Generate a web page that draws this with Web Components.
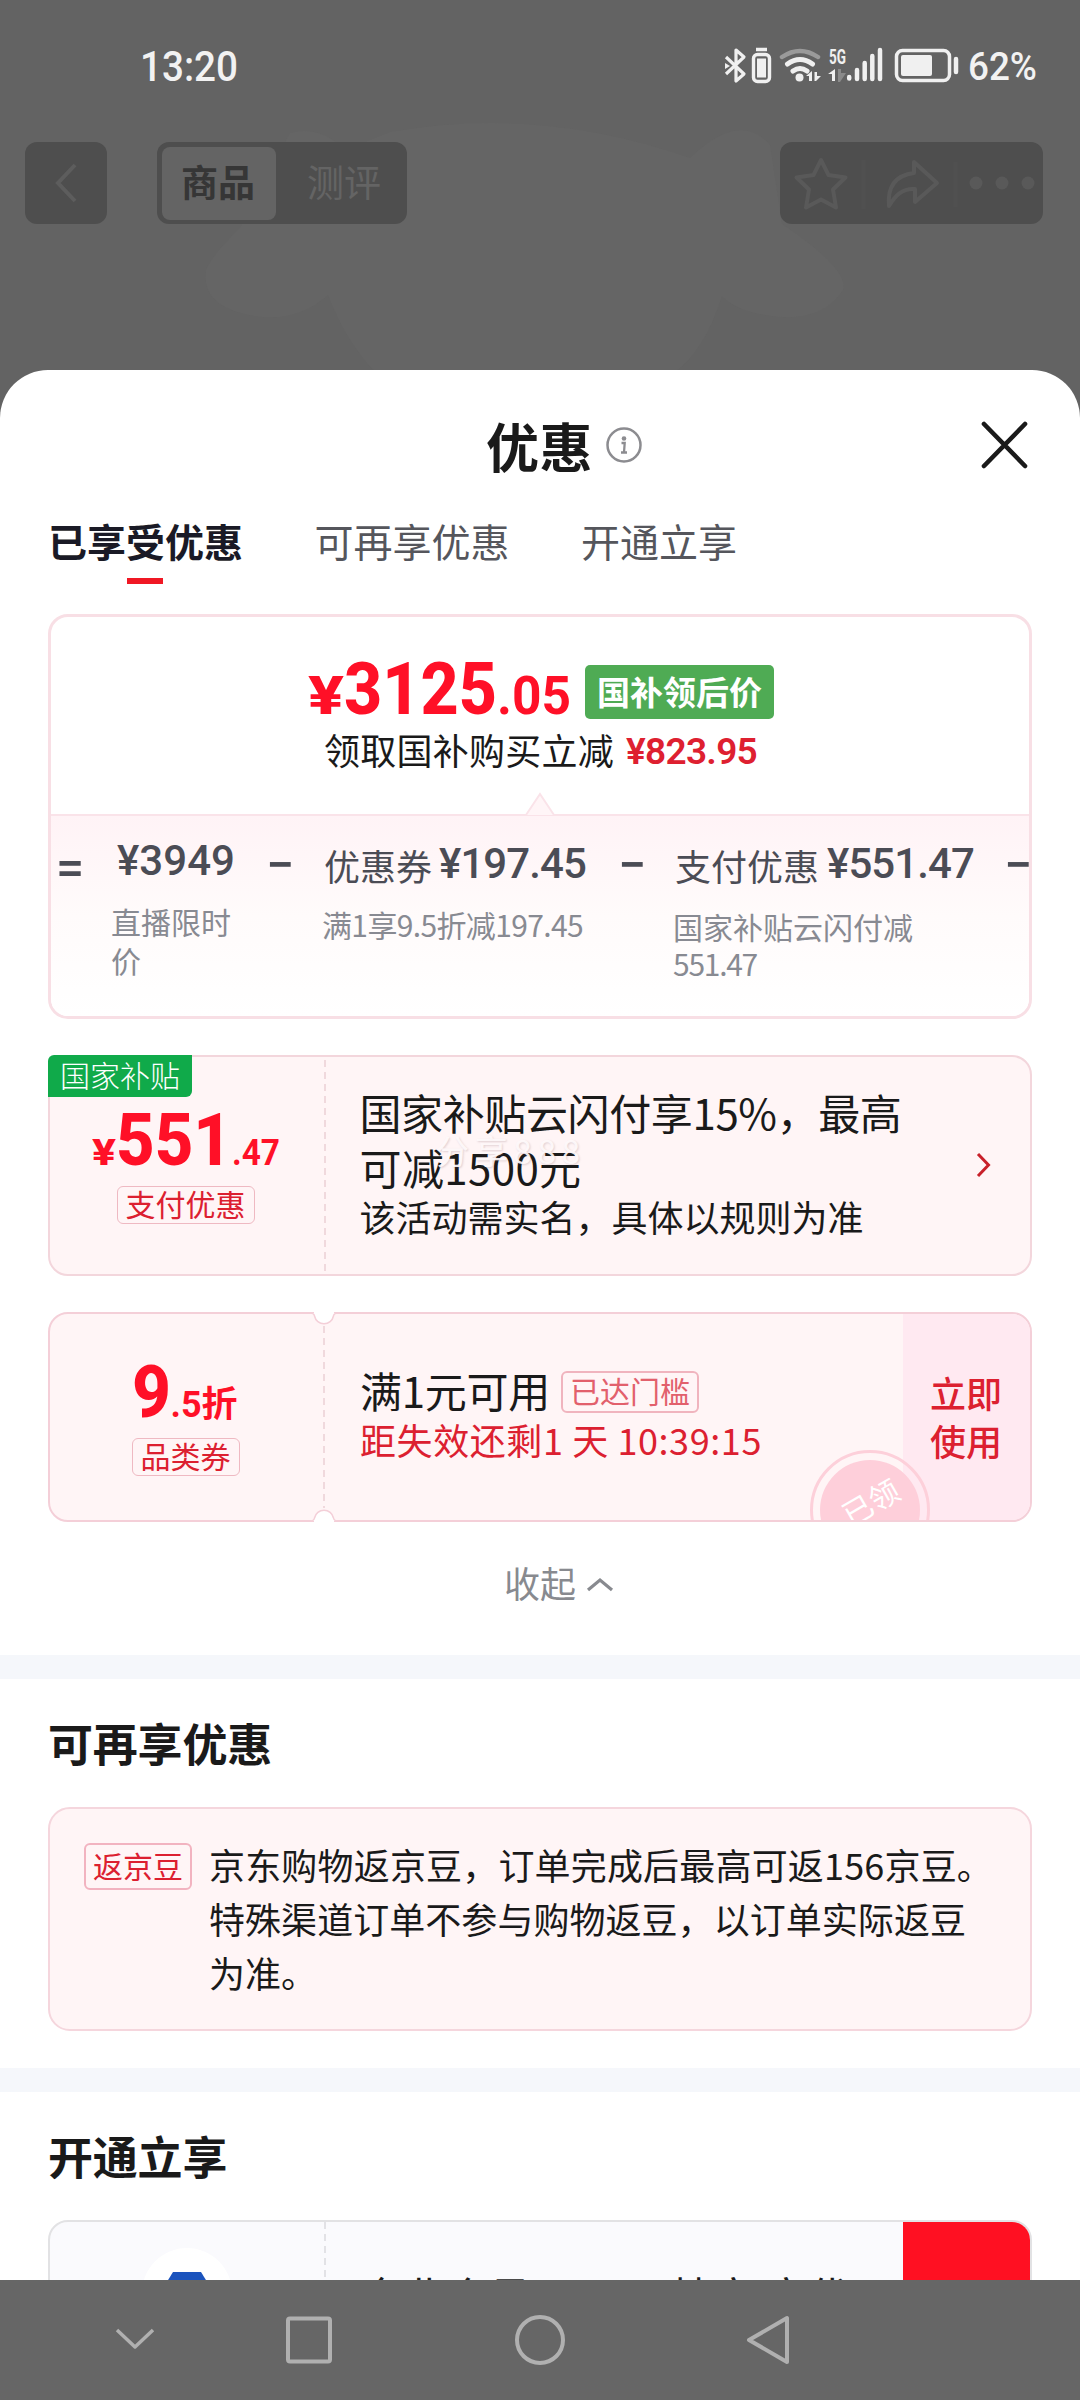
<!DOCTYPE html>
<html lang="zh-CN">
<head>
<meta charset="utf-8">
<title>优惠</title>
<style>
html,body{margin:0;padding:0}
body{width:1080px;height:2400px;overflow:hidden;background:#636363;font-family:"Noto Sans CJK SC",sans-serif;color:#1a1a1a}
</style>
</head>
<body>
<promo-page></promo-page>
<script>
function def(name, css, html) {
  customElements.define(name, class extends HTMLElement {
    connectedCallback() {
      if (this.shadowRoot) return;
      const root = this.attachShadow({mode: 'open'});
      root.innerHTML = '<style>*{box-sizing:border-box}.n{font-family:Roboto,"Noto Sans CJK SC",sans-serif}' + css + '</style>' + html;
    }
  });
}

def('status-bar', `
:host{display:flex;height:134px;align-items:center;padding-left:140px;color:#f2f2f2;position:relative}
.time{font-size:42px;font-weight:500;line-height:134px}
svg{display:block}
.icons{display:flex;align-items:flex-start;margin-left:486px;height:134px;padding-top:46px}
.pct{font-size:39px;font-weight:500;line-height:134px;margin-left:8px}`, `
<fit-text class="time n" w="98" mode="scale">13:20</fit-text>
<div class="icons">
<svg width="236" height="40" viewBox="0 0 236 40" fill="none" stroke="#f0f0f0">
 <path d="M2 11 L20 28 L12 35 L12 4 L20 11 L2 28" stroke-width="3.2" stroke-linejoin="round"/>
 <path d="M1 17l5 3-5 3z" fill="#f0f0f0" stroke="none"/>
 <rect x="29.5" y="8.500" width="16" height="27" rx="4" stroke-width="3.4"/>
 <rect x="33" y="12.500" width="9" height="19" fill="#f0f0f0" stroke="none"/>
 <path d="M32 3.500h11" stroke-width="3.500"/>
 <path d="M58 11 Q76 -1 94 11" stroke="#9a9a9a" stroke-width="4.500" stroke-linecap="round"/>
 <path d="M63.500 18 Q76 9 88.500 18" stroke-width="5" stroke-linecap="round"/>
 <path d="M69 25 Q76 20 83 25" stroke-width="5" stroke-linecap="round"/>
 <circle cx="75.500" cy="31.500" r="4" fill="#f0f0f0" stroke="none"/>
 <path d="M82 30l6-5v10h-3v-5zM90.500 26h2.500v4h4l-5 5h-1.500z" fill="#f0f0f0" stroke="none"/>
 <text x="105" y="17.500" textLength="17" lengthAdjust="spacingAndGlyphs" font-family="Roboto" font-weight="700" font-size="21" fill="#f0f0f0" stroke="none">5G</text>
 <path d="M104 28l7-5v12h-3v-7z" fill="#f0f0f0" stroke="none"/>
 <path d="M114 23h3v4h5l-6 9h-2z" fill="#8a8a8a" stroke="none"/>
 <path d="M125.200 31v1.500M133 24v9M140.700 17v16M148.300 10v23M156 4v29" stroke-width="4.500" stroke-linecap="round"/>
 <rect x="172.500" y="4.500" width="53" height="30" rx="6" stroke-width="3.500"/>
 <rect x="177" y="9" width="31" height="21" rx="2" fill="#f0f0f0" stroke="none"/>
 <path d="M232 13v13" stroke-width="4.500" stroke-linecap="round"/>
</svg></div>
<fit-text class="pct n" w="69" mode="scale">62%</fit-text>`);

def('app-toolbar', `
:host{display:flex;margin-top:8px;height:82px;padding-left:25px;position:relative}
.box{background:#4e4e4e;border-radius:12px;height:82px}
.back{width:82px}
.seg{width:250px;margin-left:50px;display:flex;padding:5px;font-size:37px;line-height:69px;text-align:center}
.on{width:114px;height:73px;border-radius:8px;background:#646464;color:#363636;font-weight:700;padding-right:2px}
.off{flex:1;color:#646464;padding-left:10px}
.act{width:263px;margin-left:373px}`, `
<div class="box back"><svg width="82" height="82" fill="none" stroke="#5d5d5d" stroke-width="4"><path d="M50 23L33 41l17 18"/></svg></div>
<div class="box seg"><div class="on">商品</div><div class="off">测评</div></div>
<div class="box act"><svg width="263" height="82" fill="none" stroke="#595959" stroke-width="4" stroke-linejoin="round">
<path d="M41 18l7.500 15 17 2.500-12.500 12 3 18-15-8-15 8 3-18-12.500-12 17-2.500z"/>
<path d="M134 20l23 21-22 19V47c-13-1-20 7-26 17-2-22 9-31 25-33z"/>
<path d="M83.500 18v49M175.500 20v45" stroke="#505050"/>
<g fill="#595959" stroke="none"><circle cx="196" cy="41" r="6.500"/><circle cx="222" cy="41" r="6.500"/><circle cx="248" cy="41" r="6.500"/></g></svg></div>`);

def('sheet-title', `
:host{display:flex;height:150px;margin-bottom:-2px;align-items:center;padding:0 50px 0 486px;font-size:53px;font-weight:700}
.i{margin-left:13px}.x{margin-left:auto}svg{display:block}`, `
<fit-text w="107">优惠</fit-text>
<svg class="i" width="36" height="36" fill="none" stroke="#8c8c90" stroke-width="2.500"><circle cx="18" cy="18" r="16.500"/><path d="M15.500 16h3.200l-.7 9.500M15 25.500h6" stroke-width="2.300"/><circle cx="18" cy="11.500" r="2.300" fill="#8c8c90" stroke="none"/></svg>
<svg class="x" width="52" height="52" fill="none" stroke="#1a1a1a" stroke-width="4.600" stroke-linecap="round"><path d="M6 5l41 42M47 5L6 47"/></svg>`);

def('tab-item', `
:host{display:block;width:195px;font-size:39px;line-height:44px;color:#55565c;white-space:nowrap}
:host([active]){color:#1a1a26;font-weight:700}
:host([active])::after{content:"";display:block;width:36px;height:6px;background:#f01824;margin:16px auto 0 79px}`, `<slot></slot>`);

def('tab-bar', `:host{display:flex;gap:71.500px;height:96px;padding-left:48px}`, `
<tab-item active>已享受优惠</tab-item><tab-item>可再享优惠</tab-item><tab-item>开通立享</tab-item>`);

def('price-figure', `
:host{display:flex;align-items:baseline;height:60px;font-family:Roboto,"Noto Sans CJK SC",sans-serif;font-weight:700;color:#ff1027;line-height:60px}
::slotted(*){line-height:60px}`, `<slot></slot>`);

def('outline-tag', `
:host{display:block;font-size:30px;color:#dc2030;border:1.500px solid #efb9c2;border-radius:6px;white-space:nowrap;text-align:center;box-sizing:border-box}`, `<slot></slot>`);

def('price-card', `
:host{display:block;height:405px;margin:0 48px;border:3px solid #f8dfe5;border-radius:20px;overflow:hidden;box-sizing:border-box}
.top{height:197px;padding-top:42px;position:relative}
.row{display:flex;padding-left:257px;height:60px}
.badge{background:#4fab54;color:#fff;border-radius:5px;width:189px;height:54px;margin:6px 0 0 14px;font-size:33px;font-weight:700;line-height:52px;text-align:center;white-space:nowrap}
.sub{display:flex;margin-top:10px;padding-left:273px;height:41px;line-height:41px;font-size:36px}
.sub .n{color:#de2030;font-weight:600;font-size:37px;margin-left:12px;line-height:46px}
.notch{position:absolute;left:472px;bottom:-2px}
.calc{height:202px;border-top:2px solid #fae3e9;background:linear-gradient(#fff3f6,#fffbfb 50%,#fff);display:grid;grid-template-columns:60px 155px 58px 294px 56px 330px 30px;color:#4b4c55}
.line{display:flex;height:44px;line-height:44px;font-size:36px;white-space:nowrap}
.line .n{font-size:42px;font-weight:500}
.line .c{line-height:47px}
.c1{padding-top:23px}.c2{padding-top:26px}
.d{font-size:30px;color:#888a92}
.op{font-size:50px;font-weight:500;line-height:50px;padding-top:24px}`, `
<div class="top">
 <div class="row">
  <price-figure><fit-text w="36" style="font-size:53px;font-weight:800" mode="scale">¥</fit-text><fit-text w="153" style="font-size:73px;font-weight:800" mode="scale">3125</fit-text><fit-text w="74" style="font-size:54px" mode="scale">.05</fit-text></price-figure>
  <div class="badge">国补领后价</div>
 </div>
 <div class="sub"><fit-text w="290">领取国补购买立减</fit-text><fit-text class="n" w="131">¥823.95</fit-text></div>
 <svg class="notch" width="34" height="24"><path d="M3 23L17 2l14 21" fill="#fff5f7" stroke="#fae3e9" stroke-width="2"/></svg>
</div>
<div class="calc">
 <div class="op n" style="padding:27px 0 0 5px">=</div>
 <div class="c1"><div class="line" style="padding-left:6px"><fit-text class="n" w="118">¥3949</fit-text></div><div class="d" style="margin-top:19px;line-height:39px;width:122px">直播限时价</div></div>
 <div class="op n">−</div>
 <div class="c2"><div class="line"><fit-text class="c" w="108">优惠券</fit-text><fit-text class="n" style="margin-left:7px" w="147">¥197.45</fit-text></div><div class="d" style="margin-top:20px;line-height:37px;margin-left:-2px"><fit-text w="261">满1享9.5折减197.45</fit-text></div></div>
 <div class="op n">−</div>
 <div class="c2"><div class="line" style="padding-left:1px"><fit-text class="c" w="144">支付优惠</fit-text><fit-text class="n" style="margin-left:8px" w="147">¥551.47</fit-text></div><div class="d" style="margin-top:22px;line-height:37px;margin-left:-1px"><fit-text w="240">国家补贴云闪付减</fit-text><br><fit-text w="84">551.47</fit-text></div></div>
 <div class="op n">−</div>
</div>`);

def('subsidy-coupon', `
:host{display:flex;position:relative;height:221px;margin:36px 48px 0;border:2px solid #f3d6dc;border-radius:20px;background:#fff5f6;box-sizing:border-box}
.flag{position:absolute;left:-2px;top:-2px;width:144px;height:42px;background:#10aa4a;color:#fff;border-radius:6px 0 6px 0;font-size:30px;line-height:39px;text-align:center;white-space:nowrap;font-weight:300}
.l{width:274px;padding:53px 3px 0 0;display:flex;flex-direction:column;align-items:center;gap:16px}
.dash{width:1.500px;background:repeating-linear-gradient(#f0d9dd 0 7px,transparent 7px 12px);margin:3px 0}
.b{padding:27px 0 0 34px;font-size:42px;line-height:55px}
.s{font-size:36px;line-height:44px}
.wm{position:absolute;left:386px;top:73px;font-size:33px;line-height:40px;color:rgba(255,250,251,.92);text-shadow:1px 1px 2px rgba(120,80,90,.22)}
.go{position:absolute;right:38px;top:95px}`, `
<div class="l"><price-figure><fit-text w="24" style="font-size:36px;font-weight:800" mode="scale">¥</fit-text><fit-text w="116" style="font-size:73px;font-weight:800" mode="scale">551</fit-text><fit-text w="48" style="font-size:37px" mode="scale">.47</fit-text></price-figure>
<outline-tag style="width:138px;height:38px;line-height:32px">支付优惠</outline-tag></div>
<div class="dash"></div>
<div class="b"><fit-text w="542">国家补贴云闪付享15%，最高</fit-text><br><fit-text w="222">可减1500元</fit-text><div class="s"><fit-text w="504">该活动需实名，具体以规则为准</fit-text></div></div>
<fit-text class="wm" w="150">分享888</fit-text>
<div class="flag">国家补贴</div>
<svg class="go" width="16" height="26" fill="none" stroke="#c8202a" stroke-width="3"><path d="M2 2l10.500 11L2 24"/></svg>`);

def('category-coupon', `
:host{display:flex;position:relative;height:210px;margin:36px 48px 0;border:2px solid #f4cfd8;border-radius:20px;background:#fff5f6;box-sizing:border-box}
.l{width:273px;padding:48px 2px 0 0;display:flex;flex-direction:column;align-items:center;gap:16px}
.dash{width:2px;background:repeating-linear-gradient(#f0d9dd 0 7px,transparent 7px 12px);margin:12px 0}
.b{flex:1;padding:54px 0 0 35px;font-size:42px;line-height:44px}
.r{display:flex}
.s{font-size:36px;line-height:44px;margin-top:4px;color:#dc2030}
.use{width:127px;background:#ffe9f1;border-radius:0 18px 18px 0;color:#dc2030;font-size:36px;font-weight:500;line-height:48px;text-align:center;padding:54px 29px 0 27px;white-space:nowrap}
.clip{position:absolute;inset:0;overflow:hidden;border-radius:18px}
.stamp{position:absolute;left:760px;top:136px;width:120px;height:120px;border-radius:50%;border:3px solid #fdd0da;display:grid;place-items:center}
.stamp div{width:100px;height:100px;border-radius:50%;background:#fecfda;color:#fff;font-size:30px;line-height:32px;text-align:center}
.stamp span{display:inline-block;transform:rotate(-30deg);margin-top:25px}
.nt{position:absolute;left:259px}`, `
<div class="l"><price-figure style="margin-right:2px"><fit-text w="39" style="font-size:73px;font-weight:800" mode="scale">9</fit-text><fit-text w="67" style="font-size:36px">.5折</fit-text></price-figure>
<outline-tag style="width:108px;height:38px;line-height:32px">品类券</outline-tag></div>
<div class="dash"></div>
<div class="b"><div class="r"><fit-text w="190">满1元可用</fit-text><outline-tag style="margin:3px 0 0 11px;width:138px;height:42px;line-height:35px;border-width:2px;border-color:#f0b4be;color:#e2606c">已达门槛</outline-tag></div>
<div class="s"><fit-text w="402">距失效还剩1 天 10:39:15</fit-text></div></div>
<div class="use">立即<br>使用</div>
<div class="clip"><div class="stamp"><div><span>已领</span></div></div></div>
<svg class="nt" style="top:-3px" width="30" height="17"><path d="M5 0h20v4H5z" fill="#fff"/><path d="M1 2Q5 2 5.500 5A9.700 9.700 0 0 0 24.500 5Q25 2 29 2" fill="#fff" stroke="#f4cfd8" stroke-width="1.500"/><path d="M7 0h16v5H7z" fill="#fff"/></svg>
<svg class="nt" style="bottom:-3px;transform:scaleY(-1)" width="30" height="17"><path d="M5 0h20v4H5z" fill="#fff"/><path d="M1 2Q5 2 5.500 5A9.700 9.700 0 0 0 24.500 5Q25 2 29 2" fill="#fff" stroke="#f4cfd8" stroke-width="1.500"/><path d="M7 0h16v5H7z" fill="#fff"/></svg>`);

def('collapse-link', `
:host{display:flex;height:133px;padding:41px 0 0 504px;font-size:36px;line-height:39px;color:#888a8f;box-sizing:border-box}
svg{margin:13px 0 0 10px}`, `收起<svg width="28" height="16" fill="none" stroke="#888a8f" stroke-width="3.200"><path d="M2 14L14 4l12 10"/></svg>`);

def('section-block', `
:host{display:block;border-top:24px solid #f5f7fb;padding-top:34px}
h2{margin:0 0 34px 48px;font-size:45px;line-height:60px;font-weight:700;letter-spacing:-.2px}`, `<h2><slot name="title"></slot></h2><slot></slot>`);

def('bean-card', `
:host{display:flex;height:224px;margin:0 48px 37px;border:2px solid #f5d6dd;border-radius:22px;background:#fff5f6;padding:28px 0 0 34px;font-size:36px;line-height:54px;box-sizing:border-box;white-space:nowrap}
.t{margin-left:17px}`, `
<outline-tag style="margin-top:6px;width:108px;height:47px;line-height:41px;border-width:2px;border-color:#f2b3c0">返京豆</outline-tag>
<div class="t"><fit-text w="784">京东购物返京豆，订单完成后最高可返156京豆。</fit-text><br><fit-text w="757">特殊渠道订单不参与购物返豆，以订单实际返豆</fit-text><br>为准。</div>`);

def('member-card', `
:host{display:flex;height:209px;margin:0 48px;border:2px solid #e2e2e4;border-radius:20px;background:#fafafd;overflow:hidden;box-sizing:border-box}
.l{width:274px;padding:26px 0 0 92px}
.dash{width:1.500px;background:repeating-linear-gradient(#e2e2e6 0 7px,transparent 7px 12px)}
.b{flex:1;padding:48px 0 0 34px;font-size:43px;line-height:50px;white-space:nowrap;display:flex;gap:138px}
.r{width:127px;background:#ff1022}`, `
<div class="l"><svg width="90" height="90"><circle cx="45" cy="45" r="45" fill="#fff"/><path d="M31 24h28l16 26-16 26H31L15 50z" fill="#1b53bd"/></svg></div>
<div class="dash"></div><div class="b"><span>企业会员</span><span>特享 享优</span></div><div class="r"></div>`);

def('promo-sheet', `
:host{display:block;background:#fff;height:1910px;overflow:hidden;border-radius:48px 48px 0 0;margin-top:146px;position:relative}`, `
<sheet-title></sheet-title><tab-bar></tab-bar>
<price-card></price-card><subsidy-coupon></subsidy-coupon><category-coupon></category-coupon><collapse-link></collapse-link>
<section-block><span slot="title">可再享优惠</span><bean-card></bean-card></section-block>
<section-block><span slot="title">开通立享</span><member-card></member-card></section-block>`);

def('system-nav', `
:host{display:block;height:120px;background:#666}
svg{display:block}`, `
<svg width="1080" height="120" fill="none" stroke="#b0b0b0" stroke-width="4" stroke-linejoin="round"><path d="M117 50l18 17 18-17" stroke-width="3.500"/><rect x="288" y="38.500" width="42" height="43" rx="2"/><circle cx="540" cy="60" r="23"/><path d="M787 38v44L749 60z"/></svg>`);

def('promo-page', `
:host{display:block;width:1080px;height:2400px;background:#636363;position:relative}
.bg{position:absolute;left:0;top:0}`, `
<svg class="bg" width="1080" height="400" fill="#656565"><path d="M390 132Q540 105 690 158Q740 110 770 145L782 224Q850 270 843 290Q820 325 765 315Q735 310 722 296Q705 350 675 372H375Q345 340 328 295Q300 320 262 317Q200 310 206 270Q212 255 240 228L290 133Q320 125 345 150Z"/></svg>
<status-bar></status-bar><app-toolbar></app-toolbar><promo-sheet></promo-sheet><system-nav></system-nav>`);

/* One-line text set to a given advance width: by letter spacing, or by horizontal scaling with mode="scale". */
customElements.define('fit-text', class extends HTMLElement {
  connectedCallback() {
    if (this.shadowRoot) return;
    this.attachShadow({mode: 'open'}).innerHTML =
      '<style>:host{display:inline-block;white-space:nowrap;flex:none}span{display:inline-block;transform-origin:0 50%}</style><span><slot></slot></span>';
    const span = this.shadowRoot.querySelector('span');
    const w = +this.getAttribute('w');
    const natural = span.getBoundingClientRect().width;
    if (!natural) return;
    if (this.getAttribute('mode') === 'scale') {
      span.style.transform = 'scaleX(' + w / natural + ')';
    } else {
      span.style.letterSpacing = (w - natural) / [...this.textContent].length + 'px';
    }
    this.style.width = w + 'px';
  }
});
</script>
</body>
</html>
